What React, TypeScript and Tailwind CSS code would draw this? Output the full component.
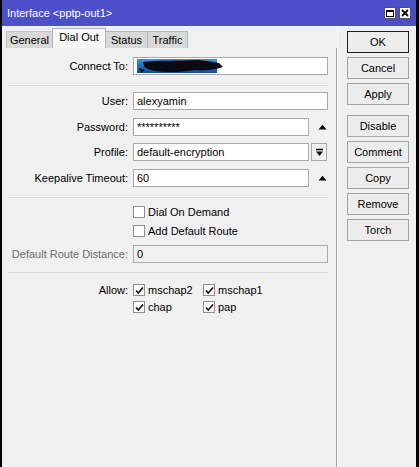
import React from "react";

function Check({ checked }: { checked?: boolean }) {
  return (
    <span className="w-[12px] h-[12px] border border-[#8e8f8f] bg-white flex items-center justify-center shrink-0">
      {checked && (
        <svg width="9" height="9" viewBox="0 0 9 9">
          <path d="M1 4.5 L3.3 7 L8 1.5" stroke="#1a1a1a" strokeWidth="1.8" fill="none" />
        </svg>
      )}
    </span>
  );
}

function Up() {
  return (
    <svg width="9" height="6" viewBox="0 0 9 6" className="shrink-0">
      <path d="M0.5 5.5 L4.5 0.8 L8.5 5.5 Z" fill="#000" />
    </svg>
  );
}

function Row({ label, children, gray }: { label: string; children: React.ReactNode; gray?: boolean }) {
  return (
    <div className="flex items-center h-[18px]">
      <div className={`w-[126px] text-right ${gray ? "text-[#6d6d6d]" : "text-black"}`}>{label}</div>
      <div className="ml-[5px] flex items-center">{children}</div>
    </div>
  );
}

function Input({ value, w = 195, disabled }: { value?: React.ReactNode; w?: number; disabled?: boolean }) {
  const wc = w === 195 ? "w-[195px]" : "w-[176px]";
  return (
    <div
      className={`${wc} h-[18px] border border-[#a9a9a9] ${disabled ? "bg-[#f0f0f0]" : "bg-white"} flex items-center pl-[3px] overflow-hidden whitespace-nowrap`}
    >
      {value}
    </div>
  );
}

function Btn({ label, def }: { label: string; def?: boolean }) {
  return (
    <div
      className={`w-[62px] h-[22px] flex items-center justify-center bg-[#ededed] ${
        def ? "border border-[#1e1e1e]" : "border border-[#a3a3a3]"
      }`}
    >
      {label}
    </div>
  );
}

export default function App() {
  return (
    <div className="w-[419px] h-[467px] overflow-hidden bg-[#f0f0f0] text-[11px] text-black font-['Liberation_Sans',Arial,sans-serif] leading-none">
      <div className="h-full flex flex-col border-l-2 border-r-[3px] border-black">
        {/* Title bar */}
        <div className="h-[26px] bg-[#4b50c9] flex items-center pl-[5px] pr-[5px] shrink-0">
          <span className="text-white text-[11px]">Interface &lt;pptp-out1&gt;</span>
          <div className="ml-auto flex items-center gap-[3px]">
            <div className="w-[12px] h-[12px] bg-white border border-[#555] flex items-center justify-center">
              <div className="w-[8px] h-[7px] border border-black border-t-2" />
            </div>
            <div className="w-[12px] h-[12px] bg-white border border-[#555] flex items-center justify-center">
              <svg width="8" height="8" viewBox="0 0 8 8">
                <path d="M1 1 L7 7 M7 1 L1 7" stroke="#000" strokeWidth="1.8" />
              </svg>
            </div>
          </div>
        </div>

        <div className="flex flex-1">
          {/* Left column */}
          <div className="w-[335px] flex flex-col">
            <div className="h-[22px] flex items-end pl-[4px] shrink-0">
              <div className="w-[46px] h-[17px] bg-[#d9d9d9] border-t border-l border-[#c4c4c4] flex items-center justify-center">
                General
              </div>
              <div className="w-[54px] h-[20px] bg-[#f9f9f9] border-t border-l border-r border-[#b4b4b4] flex items-center justify-center pb-[3px]">
                Dial Out
              </div>
              <div className="w-[42px] h-[17px] bg-[#d9d9d9] border-t border-r border-[#b4b4b4] flex items-center justify-center">
                Status
              </div>
              <div className="w-[40px] h-[17px] bg-[#d9d9d9] border-t border-r border-[#b4b4b4] flex items-center justify-center">
                Traffic
              </div>
            </div>

            <div className="flex-1 border-r border-[#a0a0a0] flex flex-col">
              <div className="mt-[9px]">
                <Row label="Connect To:">
                  <Input
                    value={
                      <svg width="88" height="16" viewBox="0 0 88 16">
                        <defs>
                          <linearGradient id="g" x1="0" y1="0" x2="0" y2="1">
                            <stop offset="0" stopColor="#3b8fd9" />
                            <stop offset="1" stopColor="#0b4f9c" />
                          </linearGradient>
                        </defs>
                        <rect x="0" y="1" width="80" height="14" fill="url(#g)" />
                        <path
                          d="M6 4 C20 2 40 3 62 2 C70 3 76 4 82 5 L86 9 C80 11 70 13 58 12 C46 14 30 15 18 13 C12 12 8 10 7 8 Z"
                          fill="#0a0a12"
                        />
                        <path d="M2 10 L8 12 L4 15 Z" fill="#0a0a12" />
                      </svg>
                    }
                  />
                </Row>
              </div>
              <div className="mt-[10px] ml-[6px] w-[320px] h-px bg-[#d7d7d7]" />
              <div className="mt-[6px]">
                <Row label="User:">
                  <Input value="alexyamin" />
                </Row>
              </div>
              <div className="mt-[8px]">
                <Row label="Password:">
                  <Input w={176} value="**********" />
                  <span className="ml-[9px]">
                    <Up />
                  </span>
                </Row>
              </div>
              <div className="mt-[7px]">
                <Row label="Profile:">
                  <Input w={176} value="default-encryption" />
                  <div className="ml-[2px] w-[16px] h-[18px] border border-[#a9a9a9] bg-[#f0f0f0] flex items-center justify-center">
                    <svg width="9" height="9" viewBox="0 0 9 9">
                      <path d="M1 1.5 H8" stroke="#000" strokeWidth="1.5" />
                      <path d="M1 3.5 L8 3.5 L4.5 8 Z" fill="#000" />
                    </svg>
                  </div>
                </Row>
              </div>
              <div className="mt-[8px]">
                <Row label="Keepalive Timeout:">
                  <Input w={176} value="60" />
                  <span className="ml-[9px]">
                    <Up />
                  </span>
                </Row>
              </div>
              <div className="mt-[10px] ml-[6px] w-[320px] h-px bg-[#d7d7d7]" />
              <div className="mt-[6px] h-[16px] flex items-center pl-[131px]">
                <Check />
                <span className="ml-[3px]">Dial On Demand</span>
              </div>
              <div className="mt-[3px] h-[16px] flex items-center pl-[131px]">
                <Check />
                <span className="ml-[3px]">Add Default Route</span>
              </div>
              <div className="mt-[6px]">
                <Row label="Default Route Distance:" gray>
                  <Input value="0" disabled />
                </Row>
              </div>
              <div className="mt-[9px] ml-[6px] w-[320px] h-px bg-[#d7d7d7]" />
              <div className="mt-[9px] h-[16px] flex items-center">
                <div className="w-[126px] text-right">Allow:</div>
                <div className="ml-[5px] w-[70px] flex items-center">
                  <Check checked />
                  <span className="ml-[3px]">mschap2</span>
                </div>
                <div className="flex items-center">
                  <Check checked />
                  <span className="ml-[3px]">mschap1</span>
                </div>
              </div>
              <div className="mt-[1px] h-[16px] flex items-center">
                <div className="w-[126px]" />
                <div className="ml-[5px] w-[70px] flex items-center">
                  <Check checked />
                  <span className="ml-[3px]">chap</span>
                </div>
                <div className="flex items-center">
                  <Check checked />
                  <span className="ml-[3px]">pap</span>
                </div>
              </div>
            </div>
          </div>

          {/* Right column */}
          <div className="flex-1 border-l border-[#fafafa] pl-[9px] pt-[5px] flex flex-col">
            <div className="flex flex-col gap-[4px]">
              <Btn label="OK" def />
              <Btn label="Cancel" />
              <Btn label="Apply" />
            </div>
            <div className="mt-[10px] flex flex-col gap-[4px]">
              <Btn label="Disable" />
              <Btn label="Comment" />
              <Btn label="Copy" />
              <Btn label="Remove" />
              <Btn label="Torch" />
            </div>
          </div>
        </div>
      </div>
    </div>
  );
}
